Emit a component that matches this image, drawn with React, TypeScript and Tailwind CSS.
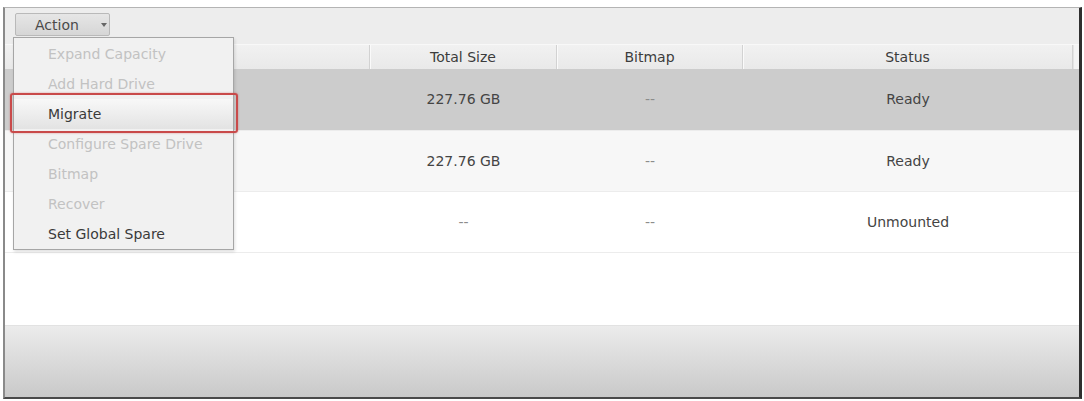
import React from "react";

const font = "font-['DejaVu_Sans',sans-serif]";

const menuItems: { label: string; enabled: boolean; active?: boolean }[] = [
  { label: "Expand Capacity", enabled: false },
  { label: "Add Hard Drive", enabled: false },
  { label: "Migrate", enabled: true, active: true },
  { label: "Configure Spare Drive", enabled: false },
  { label: "Bitmap", enabled: false },
  { label: "Recover", enabled: false },
  { label: "Set Global Spare", enabled: true },
];

const rows = [
  { size: "227.76 GB", bitmap: "--", status: "Ready", bg: "bg-[#cccccc]", h: "h-[62px]" },
  { size: "227.76 GB", bitmap: "--", status: "Ready", bg: "bg-[#f7f7f7]", h: "h-[61px]" },
  { size: "--", bitmap: "--", status: "Unmounted", bg: "bg-white", h: "h-[61px]" },
];

const cols = "grid grid-cols-[365px_187px_186px_1fr_6px]";

function Cell({ children, dim }: { children: React.ReactNode; dim?: boolean }) {
  return (
    <div
      className={`flex items-center justify-center text-[14px] ${dim ? "text-[#8c8c8c]" : "text-[#444]"}`}
    >
      {children}
    </div>
  );
}

function HeaderCell({ label, last }: { label: string; last?: boolean }) {
  return (
    <div
      className={`flex items-center justify-center text-[14px] text-[#3c3c3c] ${last ? "" : "border-r border-r-[#d2d2d2] shadow-[1px_0_0_#fafafa]"}`}
    >
      {label}
    </div>
  );
}

export default function App() {
  return (
    <div className={`relative h-[401px] w-[1084px] overflow-hidden bg-white pl-[3px] pt-[7px] ${font}`}>
      <div className="flex h-[392px] w-[1079px] flex-col border-t border-l-2 border-r-[3px] border-b-2 border-t-[#b4b4b4] border-l-[#8a8a8a] border-r-[#2f2f2f] border-b-[#4a4a4a]">
        {/* toolbar */}
        <div className="h-[36px] shrink-0 bg-[#ededed] pl-[10px] pt-[5px]">
          <button className="flex h-[23px] w-[95px] items-center rounded-[2px] border border-[#b9b9b9] bg-gradient-to-b from-[#e6e6e6] to-[#d6d6d6] pl-[19px] text-[14px] leading-none text-[#4a4a4a]">
            Action
            <svg width="6" height="4" viewBox="0 0 6 4" className="ml-[22px]">
              <path d="M0 0h6L3 4z" fill="#666" />
            </svg>
          </button>
        </div>

        {/* header */}
        <div className={`${cols} h-[25px] shrink-0 border-t border-t-[#f8f8f8] bg-gradient-to-b from-[#f1f1f1] to-[#e9e9e9]`}>
          <HeaderCell label="Name" />
          <HeaderCell label="Total Size" />
          <HeaderCell label="Bitmap" />
          <HeaderCell label="Status" />
          <div className="border-l border-l-[#e4e4e4] bg-[#f4f4f4]" />
        </div>

        {/* rows */}
        {rows.map((r, i) => (
          <div key={i} className={`${cols} ${r.h} ${r.bg} shrink-0 border-b border-b-[#ececec]`}>
            <div />
            <Cell dim={r.size === "--"}>{r.size}</Cell>
            <Cell dim>{r.bitmap}</Cell>
            <Cell>{r.status}</Cell>
            <div />
          </div>
        ))}

        <div className="flex-1 bg-white" />

        {/* footer */}
        <div className="h-[72px] shrink-0 border-t border-t-[#e2e2e2] bg-gradient-to-b from-[#ececec] to-[#c9c9c9]" />
      </div>

      {/* dropdown menu */}
      <div className="absolute left-[13px] top-[37px] w-[221px] border border-[#a6a6a6] bg-[#f1f1f1] pt-[1px] shadow-[1px_2px_3px_rgba(0,0,0,0.12)]">
        {menuItems.map((m) => (
          <div
            key={m.label}
            className={`flex h-[30px] items-center pl-[34px] text-[14px] ${
              m.enabled ? "text-[#3a3a3a]" : "text-[#c2c2c2]"
            } ${m.active ? "bg-gradient-to-b from-[#f8f8f8] to-[#e3e3e3]" : ""}`}
          >
            {m.label}
          </div>
        ))}
      </div>

      {/* highlight annotation */}
      <div className="pointer-events-none absolute left-[10px] top-[93px] h-[40px] w-[228px] rounded-[3px] border-2 border-[#c94a4a] shadow-[0_0_2px_rgba(200,70,70,0.6)]" />
    </div>
  );
}
